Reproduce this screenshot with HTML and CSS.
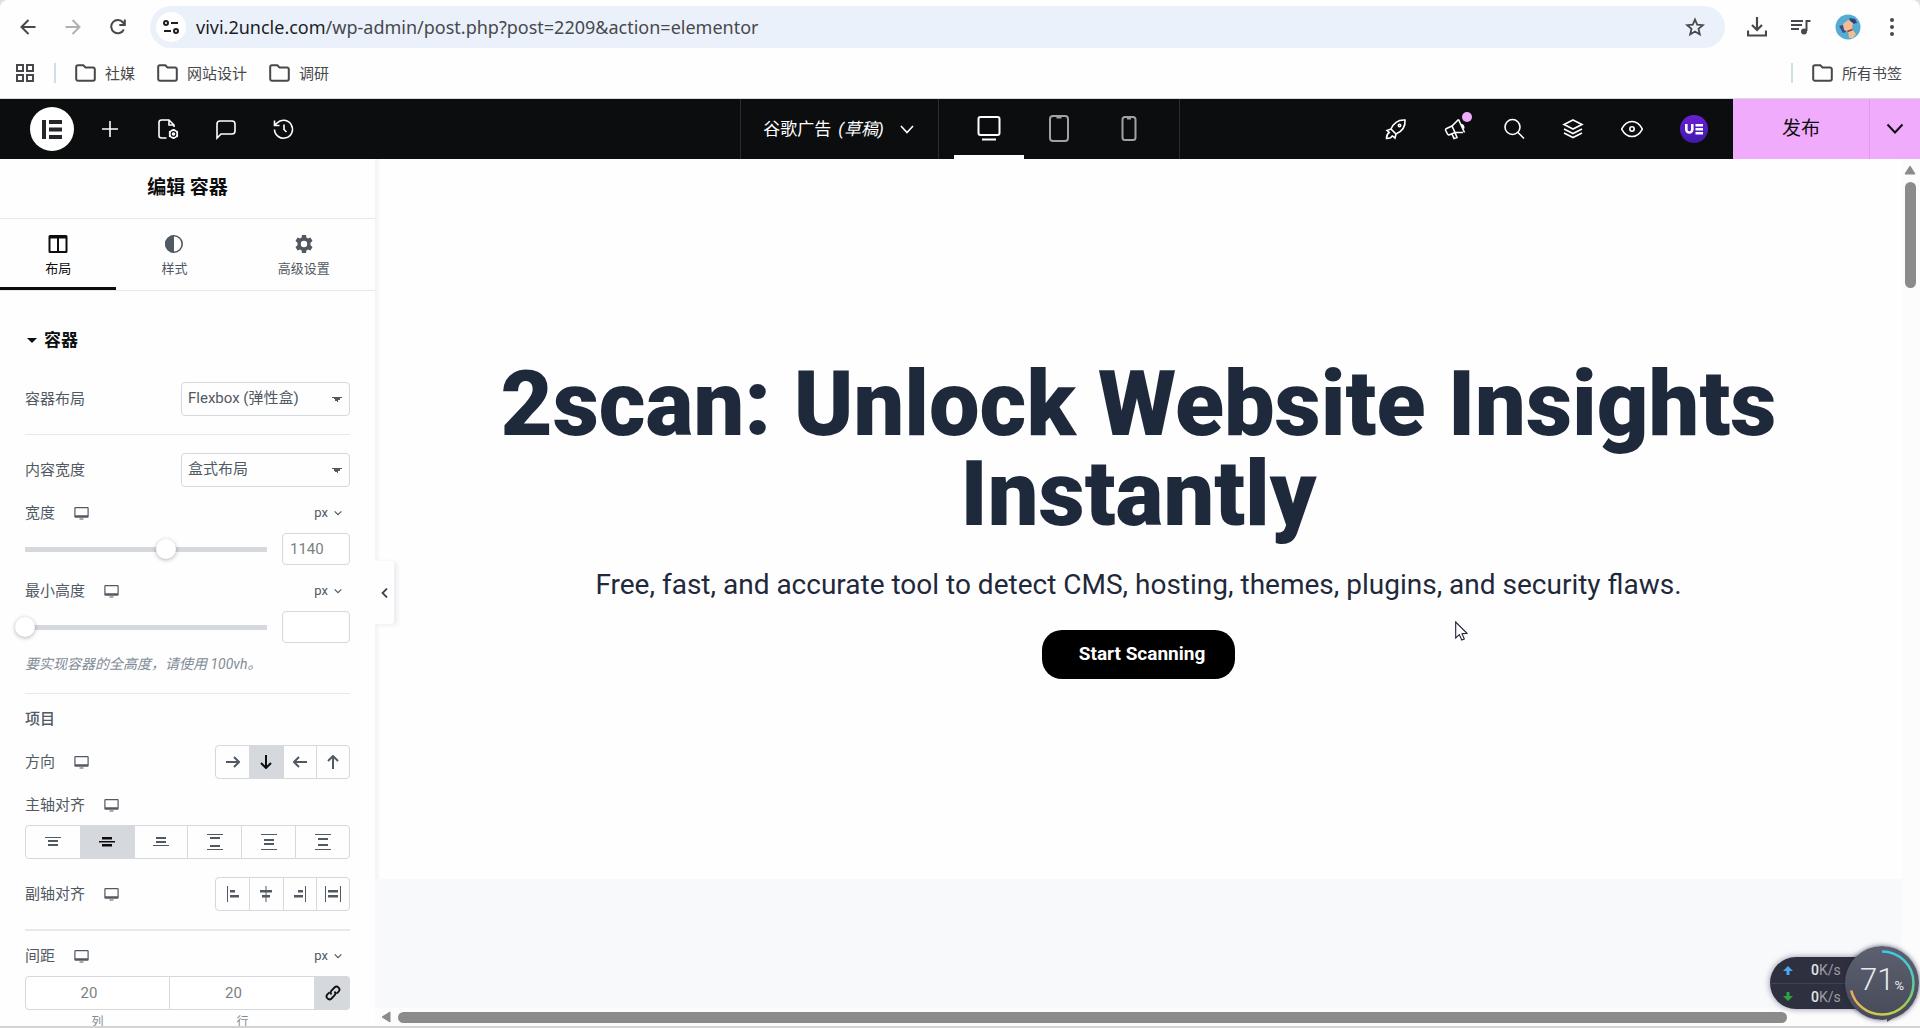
FILE: index.html
```
<!DOCTYPE html>
<html lang="zh-CN">
<head>
    <meta charset="UTF-8">
    <meta name="viewport" content="width=device-width, initial-scale=1.0">
    <title>Elementor - 谷歌广告</title>
    <link rel="stylesheet" href="styles.css">
</head>
<body>
    <svg class="sprite" aria-hidden="true">
        <symbol id="i-folder" viewBox="0 0 21 18"><path d="M1.2 3V15a1.8 1.8 0 0 0 1.8 1.8H18a1.8 1.8 0 0 0 1.8-1.8V5.2A1.8 1.8 0 0 0 18 3.4H10.5L8.300 1.200H3A1.800 1.800 0 0 0 1.200 3Z" fill="none" stroke="currentColor" stroke-width="2"/></symbol>
        <symbol id="i-monitor" viewBox="0 0 15 13"><path d="M1.500 0H13.500A1.200 1.200 0 0 1 14.700 1.200V9.500A1.200 1.200 0 0 1 13.500 10.700H1.500A1.200 1.200 0 0 1 .300 9.500V1.200A1.200 1.200 0 0 1 1.500 0ZM1.500 1.200V8.200H13.500V1.200ZM5.500 11.600H9.500V12.600H5.500Z" fill="currentColor" fill-rule="evenodd"/></symbol>
        <symbol id="i-down" viewBox="0 0 12 8"><path d="M1 1.500L6 6.500L11 1.500" fill="none" stroke="currentColor" stroke-width="1.800"/></symbol>
        <symbol id="i-arrow" viewBox="0 0 14 12"><path d="M0 6H13M8 1L13 6L8 11" fill="none" stroke="currentColor" stroke-width="2"/></symbol>
    </svg>

    <header class="browser">
        <div class="browser-bar">
            <button class="nav-btn" aria-label="后退"><svg width="16" height="16" viewBox="0 0 16 16"><path d="M15.500 8H1.500M8.500 1L1.500 8L8.500 15" fill="none" stroke="currentColor" stroke-width="2"/></svg></button>
            <button class="nav-btn nav-off" aria-label="前进"><svg width="16" height="16" viewBox="0 0 16 16"><path d="M.500 8H14.500M7.500 1L14.500 8L7.500 15" fill="none" stroke="currentColor" stroke-width="2"/></svg></button>
            <button class="nav-btn" aria-label="重新加载"><svg width="16" height="16" viewBox="0 0 16 16"><path d="M13.800 10.500A6.600 6.600 0 1 1 13 3.500L14.500 5.500M14.800 .500V6H9.300" fill="none" stroke="currentColor" stroke-width="2"/></svg></button>
            <div class="omnibox">
                <button class="site-info" aria-label="网站信息"><svg width="16" height="16" viewBox="0 0 16 16" fill="none" stroke="currentColor" stroke-width="2"><circle cx="3" cy="4" r="2"/><path d="M8 4H15M1 12H8"/><circle cx="13" cy="12" r="2"/></svg></button>
                <div class="url"><b>vivi.2uncle.com</b>/wp-admin/post.php?post=2209&amp;action=elementor</div>
                <button class="star" aria-label="收藏"><svg width="20" height="20" viewBox="0 0 20 20"><path d="M10 2.500L12.200 7.700L17.800 8.200L13.500 11.900L14.800 17.400L10 14.500L5.200 17.400L6.500 11.900L2.200 8.200L7.800 7.700Z" fill="none" stroke="currentColor" stroke-width="1.800"/></svg></button>
            </div>
            <div class="browser-tools">
                <button aria-label="下载"><svg width="20" height="20" viewBox="0 0 20 20" fill="none" stroke="currentColor" stroke-width="2.200"><path d="M10 0V13M5 8L10 13L15 8M1 13.500V18.500H19V13.500"/></svg></button>
                <button aria-label="媒体控件"><svg width="20" height="16" viewBox="0 0 20 16" fill="none" stroke="currentColor" stroke-width="2"><path d="M0 2H12M0 6H11M0 10H8M19.500 2H15.500V12"/><circle cx="13" cy="12.500" r="2" fill="currentColor"/></svg></button>
                <button aria-label="个人资料"><svg width="26" height="26" viewBox="0 0 26 26"><circle cx="13" cy="13" r="12.500" fill="#55acd2"/><path d="M4 12L8 11L11 18L8 19Z" fill="#3d4a8f"/><path d="M14 4L20 5L22 9L17 10Z" fill="#303f80"/><path d="M8 10L13 6L18 9L17 15L21 20L18 24L14 24L13 17L9 16Z" fill="#f2bd92"/><path d="M12.500 17.500L17.500 15.500" stroke="#a33b32" stroke-width="1.500"/></svg></button>
                <button class="menu" aria-label="菜单"><svg width="6" height="20" viewBox="0 0 6 20" fill="currentColor"><circle cx="3" cy="3" r="2"/><circle cx="3" cy="10" r="2"/><circle cx="3" cy="17" r="2"/></svg></button>
            </div>
        </div>
        <nav class="bookmarks">
            <button aria-label="标签页分组"><svg width="18" height="18" viewBox="0 0 18 18" fill="none" stroke="currentColor" stroke-width="2"><path d="M1 1H7V7H1ZM11 1H17V7H11ZM1 11H7V17H1ZM11 11H17V17H11Z"/></svg></button>
            <span class="sep"></span>
            <a href="#"><svg width="21" height="18"><use href="#i-folder"/></svg>社媒</a>
            <a href="#"><svg width="21" height="18"><use href="#i-folder"/></svg>网站设计</a>
            <a href="#"><svg width="21" height="18"><use href="#i-folder"/></svg>调研</a>
            <span class="sep sep-right"></span>
            <a href="#"><svg width="21" height="18"><use href="#i-folder"/></svg>所有书签</a>
        </nav>
    </header>

    <div class="topbar">
        <div class="topbar-left">
            <button class="logo" aria-label="Elementor"><svg width="20" height="19" viewBox="0 0 20 19" fill="#26272b"><path d="M0 0H4V19H0ZM7 0H20V4H7ZM7 7.500H20V11.500H7ZM7 15H20V19H7Z"/></svg></button>
            <button aria-label="添加元素"><svg width="22" height="22" viewBox="0 0 22 22"><path d="M11 3V19M3 11H19"/></svg></button>
            <button aria-label="页面设置"><svg width="22" height="22" viewBox="0 0 22 22"><path d="M9.500 20H4.500A2.500 2.500 0 0 1 2 17.500V4.500A2.500 2.500 0 0 1 4.500 2H12L17 7V9M12 2V7H17"/><circle cx="16.500" cy="16" r="3.800" stroke-width="1.800"/><circle cx="16.500" cy="16" r="1"/><path d="M16.500 11V12.500M16.500 19.500V21M12 13.500L13.500 14.300M19.500 17.700L21 18.500M12 18.500L13.500 17.700M19.500 14.300L21 13.500"/></svg></button>
            <button aria-label="备注"><svg width="22" height="22" viewBox="0 0 22 22"><path d="M2 20V6A3 3 0 0 1 5 3H17A3 3 0 0 1 20 6V13A3 3 0 0 1 17 16H6Z"/></svg></button>
            <button aria-label="历史记录"><svg width="22" height="22" viewBox="0 0 22 22"><path d="M1.500 11.500A9 9 0 1 0 4 5L1.500 7.500M1.500 2.500V7.500H6.500M11 6.500V11.500L13.500 14"/></svg></button>
        </div>
        <div class="topbar-center">
            <button class="doc-title">谷歌广告 <i>(草稿)</i><svg width="14" height="9" viewBox="0 0 14 9"><path d="M1 1L7 7.500L13 1"/></svg></button>
            <div class="devices">
                <button class="active" aria-label="桌面"><svg width="24" height="26" viewBox="0 0 24 26"><rect x="1.500" y="1" width="21" height="18" rx="2"/><path d="M5 23.500H19"/></svg></button>
                <button aria-label="平板"><svg width="20" height="28" viewBox="0 0 20 28"><rect x="1" y="1" width="18" height="25" rx="3"/><path d="M7.500 2.500H12.500"/></svg></button>
                <button aria-label="手机"><svg width="16" height="26" viewBox="0 0 16 26"><rect x="1.500" y="1" width="13" height="23" rx="2.500"/><path d="M6 2.500H10"/></svg></button>
            </div>
        </div>
        <div class="topbar-right">
            <button aria-label="清单"><svg width="22" height="22" viewBox="0 0 22 22"><path d="M6 11C9 4 13 1.500 20 2C20.500 8 18 13 11 16ZM6 11L2 12.500L5 15M11 16L10 20L7 17.500M6 11L11 16M4 14.500C2 16 1.500 18 1.500 20.500C4 20.500 6.500 20 7.500 17.500"/><circle cx="14.500" cy="7.500" r="1.200"/></svg></button>
            <button class="news" aria-label="新功能"><svg width="22" height="22" viewBox="0 0 22 22"><path d="M14.500 1.500L20.500 14.500M13.500 2.500L8 8L2.500 10.500A1.500 1.500 0 0 0 1.700 12.500L3.500 16A1.500 1.500 0 0 0 5.500 16.700L11 14.500L19 14.500M8 8L11 14.500M8 16L10 20.500L13 19.500L11 14.500M17.500 6.500A3 3 0 0 1 19.500 10.500M14.500 1.500L12.500 3.500"/></svg><span class="dot"></span></button>
            <button aria-label="查找"><svg width="22" height="22" viewBox="0 0 22 22"><circle cx="9.500" cy="9" r="7.500"/><path d="M15 14.500L21 20.500"/></svg></button>
            <button aria-label="结构"><svg width="22" height="22" viewBox="0 0 22 22"><path d="M11 2L20 6.500L11 11L2 6.500ZM2 11L11 15.500L20 11M2 15L11 19.500L20 15"/></svg></button>
            <button aria-label="预览"><svg width="22" height="22" viewBox="0 0 22 22"><path d="M.700 11C3 6.500 6.500 3.500 11 3.500S19 6.500 21.300 11C19 15.500 15.500 18.500 11 18.500S3 15.500 .700 11Z"/><circle cx="11" cy="11" r="2.200"/></svg></button>
            <button class="addon" aria-label="Ultimate Elementor"><svg width="28" height="28" viewBox="0 0 28 28"><path d="M6.300 9V14.500A3 3 0 0 0 12.300 14.500V9M15.500 10.200H23M15.500 14.200H23M15.500 18.200H23"/></svg></button>
            <button class="publish">发布</button>
            <button class="publish-more" aria-label="保存选项"><svg width="18" height="12" viewBox="0 0 18 12"><path d="M1.500 1.500L9 9.500L16.500 1.500"/></svg></button>
        </div>
    </div>

    <div class="workspace">
        <aside class="panel">
            <h2 class="panel-title">编辑 容器</h2>
            <div class="tabs">
                <button class="tab active"><svg width="20" height="18" viewBox="0 0 20 18" fill="currentColor"><path d="M2 0H18A1.500 1.500 0 0 1 19.500 1.500V16.500A1.500 1.500 0 0 1 18 18H2A1.500 1.500 0 0 1 .500 16.500V1.500A1.500 1.500 0 0 1 2 0ZM2.500 3.500V16H9V3.500ZM11 3.500V16H17.500V3.500Z" fill-rule="evenodd"/></svg>布局</button>
                <button class="tab"><svg width="18" height="18" viewBox="0 0 18 18"><circle cx="9" cy="9" r="8.200" fill="none" stroke="currentColor" stroke-width="1.600"/><path d="M9 0A9 9 0 0 0 9 18Z" fill="currentColor"/></svg>样式</button>
                <button class="tab"><svg width="18" height="18" viewBox="0 0 18 18"><path d="M7 0H11L11.400 2.600L13 3.500L15.500 2.500L17.500 6L15.500 7.700V10.300L17.500 12L15.500 15.500L13 14.500L11.400 15.400L11 18H7L6.600 15.400L5 14.500L2.500 15.500L.500 12L2.500 10.300V7.700L.500 6L2.500 2.500L5 3.500L6.600 2.600ZM9 5.800A3.200 3.200 0 1 0 9 12.200A3.200 3.200 0 1 0 9 5.800Z" fill="currentColor" fill-rule="evenodd"/></svg>高级设置</button>
            </div>
            <div class="controls">
                <button class="section-title"><span class="caret"></span>容器</button>
                <div class="row">
                    <label for="layout">容器布局</label>
                    <select id="layout"><option>Flexbox (弹性盒)</option><option>网格</option></select>
                </div>
                <hr>
                <div class="row">
                    <label for="content-width">内容宽度</label>
                    <select id="content-width"><option>盒式布局</option><option>全宽</option></select>
                </div>
                <div class="field">
                    <div class="field-head">
                        <label for="width">宽度</label><svg width="15" height="13"><use href="#i-monitor"/></svg>
                        <button class="unit">px<svg width="8" height="6"><use href="#i-down"/></svg></button>
                    </div>
                    <div class="slider">
                        <input type="range" aria-label="宽度" min="500" max="1600" value="1140">
                        <input type="text" id="width" placeholder="1140">
                    </div>
                </div>
                <div class="field">
                    <div class="field-head">
                        <label for="min-height">最小高度</label><svg width="15" height="13"><use href="#i-monitor"/></svg>
                        <button class="unit">px<svg width="8" height="6"><use href="#i-down"/></svg></button>
                    </div>
                    <div class="slider">
                        <input type="range" aria-label="最小高度" min="0" max="1440" value="0">
                        <input type="text" id="min-height">
                    </div>
                    <p class="note">要实现容器的全高度，请使用 100vh。</p>
                </div>
                <hr>
                <h3 class="heading">项目</h3>
                <div class="row">
                    <span class="label">方向</span><svg width="15" height="13"><use href="#i-monitor"/></svg>
                    <div class="choices">
                        <button aria-label="横排"><svg width="14" height="12"><use href="#i-arrow"/></svg></button>
                        <button class="on" aria-label="竖排"><svg class="down" width="14" height="12"><use href="#i-arrow"/></svg></button>
                        <button aria-label="反向横排"><svg class="left" width="14" height="12"><use href="#i-arrow"/></svg></button>
                        <button aria-label="反向竖排"><svg class="up" width="14" height="12"><use href="#i-arrow"/></svg></button>
                    </div>
                </div>
                <div class="field">
                    <div class="field-head"><span class="label">主轴对齐</span><svg width="15" height="13"><use href="#i-monitor"/></svg></div>
                    <div class="choices choices-wide">
                        <button aria-label="起点"><svg width="16" height="16" viewBox="0 0 16 16"><path d="M0 3H16V4H0ZM3 6H13V8H3ZM3 10H13V12H3Z"/></svg></button>
                        <button class="on" aria-label="居中"><svg width="16" height="16" viewBox="0 0 16 16"><path d="M3 3H13V5.500H3ZM0 7H16V8.500H0ZM3 10H13V12.500H3Z"/></svg></button>
                        <button aria-label="末尾"><svg width="16" height="16" viewBox="0 0 16 16"><path d="M3 3H13V5H3ZM3 7H13V9H3ZM0 11H16V12H0Z"/></svg></button>
                        <button aria-label="两端对齐"><svg width="16" height="16" viewBox="0 0 16 16"><path d="M0 0H16V1H0ZM3 3H13V5H3ZM3 11H13V13H3ZM0 15H16V16H0Z"/></svg></button>
                        <button aria-label="环绕对齐"><svg width="16" height="16" viewBox="0 0 16 16"><path d="M0 0H16V1H0ZM3 5H13V7H3ZM3 9H13V11H3ZM0 15H16V16H0Z"/></svg></button>
                        <button aria-label="均匀分布"><svg width="16" height="16" viewBox="0 0 16 16"><path d="M0 0H16V1H0ZM3 4H13V6H3ZM3 10H13V12H3ZM0 15H16V16H0Z"/></svg></button>
                    </div>
                </div>
                <div class="row">
                    <span class="label">副轴对齐</span><svg width="15" height="13"><use href="#i-monitor"/></svg>
                    <div class="choices">
                        <button aria-label="起点"><svg width="16" height="16" viewBox="0 0 16 16"><path d="M2 0H3V16H2ZM5 4H10V6.500H5ZM5 9H14V11.500H5Z"/></svg></button>
                        <button aria-label="居中"><svg width="16" height="16" viewBox="0 0 16 16"><path d="M7.500 0H8.500V16H7.500ZM2 4H14V6.500H2ZM4 9H12V11.500H4Z"/></svg></button>
                        <button aria-label="末尾"><svg width="16" height="16" viewBox="0 0 16 16"><path d="M13 0H14V16H13ZM6 4H11V6.500H6ZM2 9H11V11.500H2Z"/></svg></button>
                        <button aria-label="拉伸"><svg width="16" height="16" viewBox="0 0 16 16"><path d="M0 0H1V16H0ZM15 0H16V16H15ZM3 4H13V6.500H3ZM3 9H13V11.500H3Z"/></svg></button>
                    </div>
                </div>
                <hr class="thick">
                <div class="field">
                    <div class="field-head">
                        <span class="label">间距</span><svg width="15" height="13"><use href="#i-monitor"/></svg>
                        <button class="unit">px<svg width="8" height="6"><use href="#i-down"/></svg></button>
                    </div>
                    <div class="gaps">
                        <input type="text" id="gap-col" placeholder="20">
                        <input type="text" id="gap-row" placeholder="20">
                        <button class="link" aria-label="链接数值"><svg width="16" height="16" viewBox="0 0 16 16" fill="none" stroke="currentColor" stroke-width="1.800"><path d="M6.500 9.500A3 3 0 0 1 6.500 5.500L9.500 2.500A2.900 2.900 0 0 1 13.600 6.600L11.500 8.600M9.500 6.500A3 3 0 0 1 9.500 10.500L6.500 13.500A2.900 2.900 0 0 1 2.400 9.400L4.500 7.400"/></svg></button>
                        <label for="gap-col">列</label>
                        <label for="gap-row">行</label>
                    </div>
                </div>
            </div>
        </aside>

        <main class="preview">
            <button class="collapse" aria-label="隐藏面板"><svg width="7" height="10" viewBox="0 0 7 10"><path d="M6 .500L1.500 5L6 9.500" fill="none" stroke="#3f444b" stroke-width="1.800"/></svg></button>
            <div class="page">
                <section class="hero">
                    <h1>2scan: Unlock Website Insights Instantly</h1>
                    <p>Free, fast, and accurate tool to detect CMS, hosting, themes, plugins, and security flaws.</p>
                    <a class="cta" href="#">Start Scanning</a>
                </section>
                <section class="next"></section>
            </div>
            <div class="vbar"><svg width="12" height="10" viewBox="0 0 12 10"><path d="M6 1L11 9H1Z" fill="#8b8b8b" stroke="#8b8b8b" stroke-linejoin="round"/></svg><span></span></div>
            <div class="hbar"><svg width="10" height="12" viewBox="0 0 10 12"><path d="M1 6L9 1V11Z" fill="#8b8b8b" stroke="#8b8b8b" stroke-linejoin="round"/></svg><span></span><svg width="10" height="12" viewBox="0 0 10 12"><path d="M9 6L1 1V11Z" fill="#606060"/></svg></div>
        </main>
    </div>

    <div class="monitor">
        <div class="speeds">
            <div><svg width="10" height="9" viewBox="0 0 10 9"><path d="M5 0L10 5H6.500V9H3.500V5H0Z" fill="#4aa8f0"/></svg><span><b>0</b>K/s</span></div>
            <div><svg width="10" height="9" viewBox="0 0 10 9"><path d="M5 9L10 4H6.500V0H3.500V4H0Z" fill="#2fa043"/></svg><span><b>0</b>K/s</span></div>
        </div>
        <div class="gauge">
            <svg width="74" height="74" viewBox="0 0 74 74" fill="none" stroke-width="2.500">
                <defs>
                    <linearGradient id="arc" x1="0" y1="0" x2="0" y2="1"><stop offset="0" stop-color="#3fc8e8"/><stop offset=".5" stop-color="#55cf9f"/><stop offset=".8" stop-color="#8fce5c"/><stop offset="1" stop-color="#c9cc4a"/></linearGradient>
                    <linearGradient id="arc2" x1="0" y1="0" x2="1" y2="1"><stop offset="0" stop-color="#f0a860"/><stop offset="1" stop-color="#c9cc4a"/></linearGradient>
                </defs>
                <path d="M37 5.500A31.500 31.500 0 0 1 37 68.500" stroke="url(#arc)"/>
                <path d="M37 68.500A31.500 31.500 0 0 1 6.200 44.500" stroke="url(#arc2)"/>
            </svg>
            <span>71<small>%</small></span>
        </div>
    </div>
    <svg class="cursor" width="13" height="20" viewBox="0 0 13 20"><path d="M.700 1V17L4.300 13.600L6.800 19L9.300 17.900L7 12.700L12 12.300Z" fill="#fff" stroke="#1d1f33" stroke-width="1.100"/></svg>
</body>
</html>
```
FILE: styles.css
```
:root {
    --ink: #0c0d0e;
    --text: #515962;
    --line: #d5d8dc;
    --soft-line: #e6e8ea;
    --pink: #f0abfc;
    --navy: #1e293b;
}

* {
    margin: 0;
    padding: 0;
    box-sizing: border-box;
}

body {
    position: relative;
    display: flex;
    flex-direction: column;
    height: 100vh;
    overflow: hidden;
    background: #dbe3ea;
    border-bottom: 2px solid #d3d3d3;
    font-family: Roboto, "Noto Sans CJK SC", sans-serif;
    font-size: 15px;
    line-height: 20px;
    color: var(--text);
}

button,
input,
select {
    font: inherit;
    color: inherit;
}

button {
    display: flex;
    align-items: center;
    justify-content: center;
    border: none;
    background: none;
    cursor: pointer;
}

a {
    color: inherit;
    text-decoration: none;
}

svg {
    flex-shrink: 0;
}

.sprite {
    position: absolute;
    width: 0;
    height: 0;
}

/* Browser */
.browser {
    background: #fefefe;
    border-radius: 8px 8px 0 0;
    border-bottom: 1px solid #d5dcd9;
    color: #47484b;
    font-family: "Noto Sans", "Noto Sans CJK SC", sans-serif;
}

.browser-bar {
    display: flex;
    align-items: center;
    height: 54px;
    padding: 0 25px 0 5px;
}

.nav-btn {
    width: 45px;
    height: 40px;
}

.nav-off {
    color: #b0b1b5;
}

.omnibox {
    flex: 1;
    display: flex;
    align-items: center;
    height: 42px;
    margin-left: 10px;
    padding: 0 20px 0 6px;
    border-radius: 21px;
    background: #ebf1fa;
}

.site-info {
    width: 30px;
    height: 30px;
    border-radius: 50%;
    background: #fff;
    color: #1f1f1f;
}

.url {
    flex: 1;
    margin-left: 10px;
    font-size: 18px;
    color: #47494d;
}

.url b {
    font-weight: 400;
    color: #1c1d1f;
}

.browser-tools {
    display: flex;
    align-items: center;
    gap: 24px;
    margin-left: 22px;
}

.menu {
    margin-left: 4px;
}

.bookmarks {
    display: flex;
    align-items: center;
    gap: 22px;
    height: 44px;
    padding: 0 18px 6px 16px;
}

.bookmarks a {
    display: flex;
    align-items: center;
    gap: 9px;
}

.sep {
    width: 2px;
    height: 20px;
    margin: 0 -3px 0 -2px;
    background: #cfdfe6;
}

.sep-right {
    margin-left: auto;
}

/* Editor top bar */
.topbar {
    display: grid;
    grid-template-columns: 1fr auto 1fr;
    height: 60px;
    flex-shrink: 0;
    background: var(--ink);
    color: #fff;
}

.topbar svg {
    fill: none;
    stroke: currentColor;
    stroke-width: 1.6px;
}

.topbar-left,
.topbar-right,
.devices {
    display: flex;
    align-items: center;
}

.topbar-left {
    gap: 36px;
    padding-left: 30px;
}

.topbar .logo {
    width: 44px;
    height: 44px;
    margin-right: -11px;
    border-radius: 50%;
    background: #fff;
}

.topbar .logo svg {
    fill: #26272b;
    stroke: none;
}

.topbar-center {
    display: flex;
    border-left: 1px solid #2b2d31;
    border-right: 1px solid #2b2d31;
}

.doc-title {
    gap: 7px;
    padding: 0 24px 0 22px;
    border-right: 1px solid #2b2d31;
    font-size: 17px;
}

.doc-title svg {
    margin-left: 9px;
}

.devices {
    padding: 0 15px;
}

.devices button {
    width: 70px;
    height: 60px;
    color: #a0a2a5;
}

.devices .active {
    color: #fff;
    box-shadow: inset 0 -4px #fff;
}

.topbar .devices svg {
    stroke-width: 2px;
}

.topbar-right {
    justify-content: flex-end;
    gap: 37px;
}

.news {
    position: relative;
}

.dot {
    position: absolute;
    top: -6px;
    right: -6px;
    width: 10px;
    height: 10px;
    border-radius: 50%;
    background: var(--pink);
}

.addon {
    border-radius: 50%;
    background: linear-gradient(#6a1fd6, #3d1bab);
}

.topbar .addon svg {
    stroke-width: 2.6px;
}

.publish,
.publish-more {
    height: 60px;
    background: var(--pink);
    color: var(--ink);
}

.publish {
    width: 136px;
    margin-left: -12px;
    font-size: 19px;
}

.publish-more {
    width: 51px;
    margin-left: -37px;
    border-left: 1px solid #e794f2;
}

.topbar .publish-more svg {
    stroke-width: 2px;
}

/* Panel */
.workspace {
    flex: 1;
    display: flex;
    min-height: 0;
}

.panel {
    width: 375px;
    flex-shrink: 0;
    overflow: hidden;
    background: #fefefe;
}

.panel-title {
    height: 60px;
    border-bottom: 1px solid var(--soft-line);
    font-size: 19px;
    line-height: 58px;
    text-align: center;
    color: var(--ink);
}

.tabs {
    display: flex;
    height: 72px;
    border-bottom: 1px solid var(--soft-line);
}

.tab {
    flex: 1 1 auto;
    flex-direction: column;
    gap: 6px;
    padding-top: 4px;
    font-size: 13px;
}

.tab.active {
    color: var(--ink);
    box-shadow: inset 0 -3px var(--ink);
}

.controls {
    padding: 32px 25px 0;
}

.section-title {
    gap: 7px;
    height: 34px;
    margin-bottom: 25px;
    padding-left: 2px;
    font-size: 17px;
    font-weight: 700;
    color: var(--ink);
}

.caret {
    border: 5px solid transparent;
    border-top-color: currentColor;
    border-bottom: none;
}

.row {
    display: flex;
    align-items: center;
    min-height: 34px;
    margin-top: 18px;
}

.section-title + .row {
    margin-top: 0;
}

.heading + .row {
    margin-top: 16px;
}

.row > svg,
.field-head > svg {
    margin-left: 19px;
}

hr {
    margin-top: 18px;
    border: none;
    border-top: 1px solid var(--soft-line);
}

hr.thick {
    border-top-width: 2px;
}

select {
    width: 169px;
    height: 34px;
    margin-left: auto;
    padding: 0 6px 2px;
    appearance: none;
    border: 1px solid var(--line);
    border-radius: 4px;
    background: linear-gradient(to bottom right, var(--text) 50%, transparent 50%) right 7px center / 5px 5px no-repeat, linear-gradient(to bottom left, var(--text) 50%, transparent 50%) right 12px center / 5px 5px no-repeat;
}

.field {
    margin-top: 16px;
}

hr + .field,
.heading {
    margin-top: 15px;
}

.field-head {
    display: flex;
    align-items: center;
    margin-bottom: 10px;
}

.unit {
    gap: 6px;
    margin-left: auto;
    padding-right: 8px;
    font-size: 13px;
}

input[type="text"] {
    min-width: 0;
    padding: 0 7px;
    border: 1px solid var(--line);
    border-radius: 4px;
    background: #fff;
}

input::placeholder {
    color: #7d7f82;
}

.slider {
    display: flex;
    align-items: center;
    gap: 5px;
    margin-left: -10px;
}

.slider input[type="text"] {
    width: 68px;
    height: 32px;
}

input[type="range"] {
    flex: 1;
    min-width: 0;
    height: 20px;
    appearance: none;
    background: linear-gradient(var(--line), var(--line)) center / calc(100% - 20px) 5px no-repeat;
}

input[type="range"]::-webkit-slider-thumb {
    appearance: none;
    width: 20px;
    height: 20px;
    border-radius: 50%;
    background: #fff;
    box-shadow: 0 1px 4px rgba(0, 0, 0, 0.3);
}

.note {
    margin-top: 10px;
    font-size: 14px;
    font-style: italic;
    line-height: 22px;
    color: #818a96;
}

.heading {
    font-size: 15px;
    font-weight: 500;
}

.choices {
    display: grid;
    grid-auto-flow: column;
    grid-auto-columns: 1fr;
    width: 135px;
    height: 34px;
    margin-left: auto;
    border: 1px solid var(--line);
    border-radius: 4px;
    overflow: hidden;
}

.choices-wide {
    width: 100%;
}

.choices button + button {
    border-left: 1px solid var(--line);
}

.choices .on {
    background: var(--line);
    color: var(--ink);
}

.choices svg {
    fill: currentColor;
}

.down {
    transform: rotate(90deg);
}

.left {
    transform: rotate(180deg);
}

.up {
    transform: rotate(-90deg);
}

.gaps {
    display: grid;
    grid-template-columns: 1fr 1fr 35px;
    row-gap: 2px;
}

.gaps input[type="text"] {
    height: 34px;
    padding-right: 24px;
    border-radius: 4px 0 0 4px;
    text-align: center;
}

.gaps #gap-row {
    border-left: none;
    border-radius: 0;
}

.gaps label {
    font-size: 12px;
    text-align: center;
    color: #818a96;
}

.link {
    border-radius: 0 4px 4px 0;
    background: var(--line);
    color: var(--ink);
}

/* Preview */
.preview {
    position: relative;
    flex: 1;
    display: grid;
    grid-template-columns: 1fr 18px;
    grid-template-rows: 1fr 18px;
    min-width: 0;
    background: #fcfcfd;
}

.collapse {
    position: absolute;
    top: 402px;
    left: 0;
    width: 19px;
    height: 63px;
    border-radius: 0 3px 3px 0;
    background: #fefefe;
    box-shadow: 3px 1px 4px rgba(70, 70, 130, 0.1);
}

.page {
    display: flex;
    flex-direction: column;
    min-height: 0;
    background: #fefefe;
    box-shadow: inset 4px 0 3px -1px #f3f3f8;
}

.hero {
    display: flex;
    flex-direction: column;
    align-items: center;
    justify-content: center;
    height: 720px;
    padding: 0 124px;
    text-align: center;
    color: var(--navy);
}

.hero h1 {
    font-size: 90px;
    font-weight: 900;
    line-height: 90px;
}

.hero p {
    margin: 28px 0;
    font-size: 28px;
    line-height: 34px;
}

.cta {
    padding: 14px 30px 15px 37px;
    border-radius: 20px;
    background: #000;
    color: #fff;
    font-size: 19px;
    font-weight: 700;
}

.next {
    flex: 1;
    background: #f8f9fb;
}

.vbar {
    display: flex;
    flex-direction: column;
    align-items: center;
    gap: 7px;
    padding: 6px 2px 0 0;
}

.vbar span {
    width: 11px;
    height: 106px;
    border-radius: 6px;
    background: #8b8b8b;
}

.hbar {
    display: flex;
    align-items: center;
    gap: 7px;
    padding: 0 6px;
}

.hbar span {
    flex: 1;
    max-width: 1389px;
    height: 11px;
    border-radius: 6px;
    background: #8b8b8b;
}

.hbar svg:last-child {
    margin-left: auto;
}

/* Network monitor floating over the window */
.monitor {
    position: absolute;
    right: 1px;
    bottom: 6px;
    display: flex;
    align-items: center;
    color: #9b9da6;
}

.speeds {
    width: 112px;
    height: 52px;
    margin-right: -37px;
    border-radius: 26px;
    background: #2f303f;
    box-shadow: 0 0 6px rgba(40, 40, 80, 0.5);
}

.speeds div {
    display: flex;
    align-items: center;
    gap: 18px;
    height: 26px;
    padding-left: 13px;
    font-size: 14px;
}

.speeds div + div {
    border-top: 1px solid #414350;
}

.speeds b {
    color: #e6e6ea;
    font-weight: 500;
}

.gauge {
    position: relative;
    display: flex;
    align-items: center;
    justify-content: center;
    width: 74px;
    height: 74px;
    border-radius: 50%;
    background: linear-gradient(#5c6070, #474a58);
    box-shadow: 0 0 5px rgba(30, 30, 60, 0.7);
    color: #e9eaee;
}

.gauge svg {
    position: absolute;
    inset: 0;
}

.gauge span {
    font-size: 31px;
    font-weight: 300;
}

.gauge small {
    font-size: 13px;
    font-weight: 400;
}

.cursor {
    position: absolute;
    top: 621px;
    left: 1455px;
}
```
